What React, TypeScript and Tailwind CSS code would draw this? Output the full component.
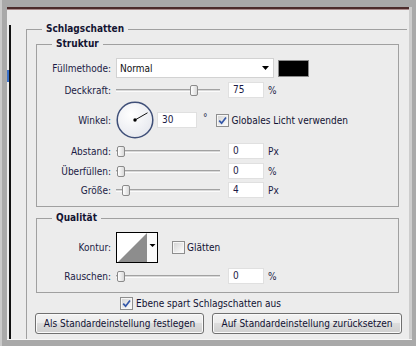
import React from "react";

const LABEL = "w-[74px] shrink-0 text-right";

function Slider({ thumb }: { thumb: string }) {
  return (
    <div className="relative ml-[5px] h-[16px] w-[104px] shrink-0 flex items-center">
      <div className="h-[3px] w-full border-t border-t-[#a2a2a2] border-b border-b-[#fbfbfb] bg-[#d8d8d8]" />
      <div
        className={
          "absolute top-[3px] h-[11px] w-[8px] rounded-[2px] border border-[#8a8a8a] bg-[linear-gradient(to_right,#ffffff,#d9d9d9)] " +
          thumb
        }
      />
    </div>
  );
}

function Num({ v, cls = "" }: { v: string; cls?: string }) {
  return (
    <div
      className={
        "h-[16px] w-[36px] shrink-0 bg-white border border-[#e0e0e0] pl-[4px] leading-[14px] " +
        cls
      }
    >
      {v}
    </div>
  );
}

function Check({ checked }: { checked?: boolean }) {
  return (
    <div className="w-[13px] h-[13px] shrink-0 border border-[#8e8e8e] bg-[#f6f6f6] p-[1px]">
      <div className="w-full h-full bg-[linear-gradient(135deg,#d6d6d6,#fbfbfb)] flex items-center justify-center">
        {checked && (
          <svg width="9" height="9" viewBox="0 0 9 9">
            <path
              d="M1.2 4.6 L3.6 7.2 L8 1.4"
              stroke="#3457a8"
              strokeWidth="1.7"
              fill="none"
            />
          </svg>
        )}
      </div>
    </div>
  );
}

function Button({ label, w }: { label: string; w: string }) {
  return (
    <div
      className={
        "h-[21px] shrink-0 rounded-[3px] border border-[#707070] bg-[linear-gradient(to_bottom,#f3f3f3_0%,#ebebeb_50%,#dddddd_50%,#cfcfcf_100%)] shadow-[inset_0_0_0_1px_#fafafa] flex items-center justify-center leading-[13px] " +
        w
      }
    >
      {label}
    </div>
  );
}

export default function App() {
  return (
    <div className="w-[416px] h-[346px] overflow-hidden bg-[#a9a9a9] border-l-[2px] border-l-[#cacaca] flex flex-col font-['DejaVu_Sans_Condensed','Liberation_Sans',Arial,sans-serif] text-[10px] text-[#1b1b45]">
      <div className="flex-1 min-h-0 ml-[5px] mr-[4px] mt-[7px] bg-[#ececec] border-r-[3px] border-r-[#cdcdcd] flex flex-col">
        <div className="h-[2px] shrink-0 bg-[#4c2c2c]" />
        <div className="h-[1px] shrink-0 bg-[#a88a8a]" />
        <div className="flex-1 min-h-0 flex">
          {/* cut-off list panel edge */}
          <div className="w-[4px] shrink-0 flex flex-col">
            <div className="h-[15px] shrink-0" />
            <div className="flex-1 border-r-[2px] border-r-[#111111] flex flex-col">
              <div className="h-[45px] shrink-0" />
              <div className="h-[12px] w-[2px] bg-[#3a70c8]" />
            </div>
          </div>

          {/* Schlagschatten */}
          <fieldset className="ml-[15px] mt-[12px] flex-1 min-w-0 border-l border-t border-[#a0a0a0] mr-[2px]">
            <legend className="ml-[15px] px-[4px] font-bold leading-[14px] text-[#141432]">
              Schlagschatten
            </legend>
            <div className="pl-[9px] flex flex-col">
              {/* Struktur */}
              <fieldset className="mt-[1px] w-[363px] border border-[#a0a0a0]">
                <legend className="ml-[15px] px-[4px] font-bold leading-[14px] text-[#141432]">
                  Struktur
                </legend>
                <div className="pt-[7px] pb-[8px] flex flex-col">
                  {/* Füllmethode */}
                  <div className="h-[20px] flex items-center">
                    <div className={LABEL}>Füllmethode:</div>
                    <div className="ml-[5px] w-[158px] h-[20px] bg-white border border-[#d2d2d2] flex items-center justify-between pl-[3px] pr-[4px] text-[#111]">
                      <span>Normal</span>
                      <svg width="7" height="4" viewBox="0 0 7 4">
                        <polygon points="0,0 7,0 3.5,4" fill="#000" />
                      </svg>
                    </div>
                    <div className="ml-[4px] w-[31px] h-[17px] bg-black border border-[#8a8a8a]" />
                  </div>
                  {/* Deckkraft */}
                  <div className="mt-[4px] h-[16px] flex items-center">
                    <div className={LABEL}>Deckkraft:</div>
                    <Slider thumb="left-[74px]" />
                    <Num v="75" cls="ml-[8px]" />
                    <span className="ml-[4px]">%</span>
                  </div>
                  {/* Winkel */}
                  <div className="mt-[3px] h-[38px] flex items-center">
                    <div className={LABEL}>Winkel:</div>
                    <svg className="ml-[5px] shrink-0" width="38" height="38" viewBox="0 0 38 38">
                      <defs>
                        <radialGradient id="dial" cx="40%" cy="35%" r="70%">
                          <stop offset="0%" stopColor="#ffffff" />
                          <stop offset="100%" stopColor="#e6e8ee" />
                        </radialGradient>
                      </defs>
                      <circle cx="19" cy="19" r="17.8" fill="url(#dial)" stroke="#3f4f78" strokeWidth="1.5" />
                      <line x1="19" y1="19" x2="31.5" y2="11.8" stroke="#111" strokeWidth="1" />
                      <circle cx="19" cy="19" r="1.7" fill="#000" />
                    </svg>
                    <Num v="30" cls="ml-[3px] w-[40px]" />
                    <span className="ml-[6px] self-start mt-[9px]">°</span>
                    <div className="ml-[8px]">
                      <Check checked />
                    </div>
                    <span className="ml-[3px] text-[#111133]">Globales Licht verwenden</span>
                  </div>
                  {/* Abstand */}
                  <div className="mt-[4px] h-[16px] flex items-center">
                    <div className={LABEL}>Abstand:</div>
                    <Slider thumb="left-[1px]" />
                    <Num v="0" cls="ml-[8px]" />
                    <span className="ml-[4px]">Px</span>
                  </div>
                  {/* Überfüllen */}
                  <div className="mt-[4px] h-[16px] flex items-center">
                    <div className={LABEL}>Überfüllen:</div>
                    <Slider thumb="left-[1px]" />
                    <Num v="0" cls="ml-[8px]" />
                    <span className="ml-[4px]">%</span>
                  </div>
                  {/* Größe */}
                  <div className="mt-[3px] h-[16px] flex items-center">
                    <div className={LABEL}>Größe:</div>
                    <Slider thumb="left-[6px]" />
                    <Num v="4" cls="ml-[8px]" />
                    <span className="ml-[4px]">Px</span>
                  </div>
                </div>
              </fieldset>

              {/* Qualität */}
              <fieldset className="mt-[4px] w-[363px] border border-[#a0a0a0]">
                <legend className="ml-[15px] px-[4px] font-bold leading-[14px] text-[#141432]">
                  Qualität
                </legend>
                <div className="pt-[7px] pb-[8px] flex flex-col">
                  <div className="h-[31px] flex items-center">
                    <div className={LABEL}>Kontur:</div>
                    <svg className="ml-[5px] shrink-0" width="42" height="31" viewBox="0 0 42 31">
                      <rect x="0.5" y="0.5" width="41" height="30" fill="#fbfbfb" stroke="#000" />
                      <rect x="1" y="1" width="30" height="29" fill="#ffffff" />
                      <polygon points="2,30 31,1 31,30" fill="#8d8d8d" />
                      <polygon points="33.5,12 39.5,12 36.5,15" fill="#000" />
                    </svg>
                    <div className="ml-[14px]">
                      <Check />
                    </div>
                    <span className="ml-[2px] text-[#111133]">Glätten</span>
                  </div>
                  <div className="mt-[5px] h-[16px] flex items-center">
                    <div className={LABEL}>Rauschen:</div>
                    <Slider thumb="left-[1px]" />
                    <Num v="0" cls="ml-[8px]" />
                    <span className="ml-[4px]">%</span>
                  </div>
                </div>
              </fieldset>

              <div className="mt-[4px] h-[13px] flex items-center">
                <div className="ml-[84px]">
                  <Check checked />
                </div>
                <span className="ml-[3px] text-[#111133]">Ebene spart Schlagschatten aus</span>
              </div>

              <div className="mt-[3px] -ml-[1px] flex gap-[8px] text-[#111133]">
                <Button label="Als Standardeinstellung festlegen" w="w-[169px]" />
                <Button label="Auf Standardeinstellung zurücksetzen" w="w-[190px]" />
              </div>
            </div>
          </fieldset>
        </div>
      </div>
      <div className="h-[1px] shrink-0 ml-[5px] mr-[4px] bg-[#f5f5f5]" />
      <div className="h-[6px] shrink-0" />
    </div>
  );
}
